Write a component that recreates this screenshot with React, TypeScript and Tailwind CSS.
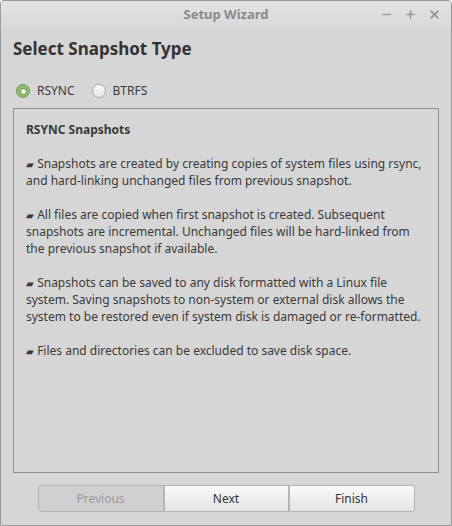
import { Minus, Plus, X } from "lucide-react";

const paragraphs = [
  "Snapshots are created by creating copies of system files using rsync, and hard-linking unchanged files from previous snapshot.",
  "All files are copied when first snapshot is created. Subsequent snapshots are incremental. Unchanged files will be hard-linked from the previous snapshot if available.",
  "Snapshots can be saved to any disk formatted with a Linux file system. Saving snapshots to non-system or external disk allows the system to be restored even if system disk is damaged or re-formatted.",
  "Files and directories can be excluded to save disk space.",
];

function Radio({ label, checked }: { label: string; checked?: boolean }) {
  return (
    <label className="flex items-center gap-[7px]">
      {checked ? (
        <span className="flex h-[14px] w-[14px] items-center justify-center rounded-full border border-[#7a9a5a] bg-[#8fbf6a]">
          <span className="h-[7px] w-[7px] rounded-full border border-[#6e8f50] bg-[#f4f4f4]" />
        </span>
      ) : (
        <span className="h-[14px] w-[14px] rounded-full border border-[#a8a8a8] bg-gradient-to-b from-[#fafafa] to-[#e6e6e6]" />
      )}
      <span>{label}</span>
    </label>
  );
}

export default function App() {
  return (
    <div className="flex h-[526px] w-[452px] flex-col overflow-hidden rounded-t-[4px] border border-[#9a9a9a] bg-[#d6d6d6] font-['Noto_Sans',sans-serif] text-[12px] text-[#3a3a3a]">
      <header className="relative flex h-[28px] shrink-0 items-center justify-center bg-gradient-to-b from-[#e4e4e4] to-[#d8d8d8]">
        <span className="text-[13px] font-bold text-[#8a8a8a]">Setup Wizard</span>
        <div className="absolute right-[10px] top-[7px] flex items-center gap-[11px] text-[#9a9a9a]">
          <Minus className="h-[13px] w-[13px]" strokeWidth={3} />
          <Plus className="h-[13px] w-[13px]" strokeWidth={3} />
          <X className="h-[13px] w-[13px]" strokeWidth={3.4} />
        </div>
      </header>

      <div className="flex flex-1 flex-col px-[12px] pb-[12px]">
        <h1 className="mt-[8px] text-[17px] font-bold leading-[24px] text-[#333]">Select Snapshot Type</h1>

        <div className="mt-[21px] flex items-center gap-[17px] pl-[3px] text-[12px]">
          <Radio label="RSYNC" checked />
          <Radio label="BTRFS" />
        </div>

        <div className="mt-[8px] h-[365px] border border-[#8f8f8f] px-[12px] pt-[12px] leading-[17px]">
          <p className="font-bold">RSYNC Snapshots</p>
          {paragraphs.map((p) => (
            <p key={p} className="mt-[17px]">
              <span className="text-[10px] leading-[0]">▰</span> {p}
            </p>
          ))}
        </div>

        <div className="mt-[12px] flex justify-center">
          <button className="h-[27px] w-[126px] rounded-l-[3px] border border-[#b5b5b5] bg-[#d0d0d0] text-[#9a9a9a]">
            Previous
          </button>
          <button className="h-[27px] w-[125px] border border-[#b5b5b5] bg-gradient-to-b from-[#fafafa] to-[#e4e4e4] text-[#333]">
            Next
          </button>
          <button className="h-[27px] w-[126px] rounded-r-[3px] border border-[#b5b5b5] bg-gradient-to-b from-[#fafafa] to-[#e4e4e4] text-[#333]">
            Finish
          </button>
        </div>
      </div>
    </div>
  );
}
